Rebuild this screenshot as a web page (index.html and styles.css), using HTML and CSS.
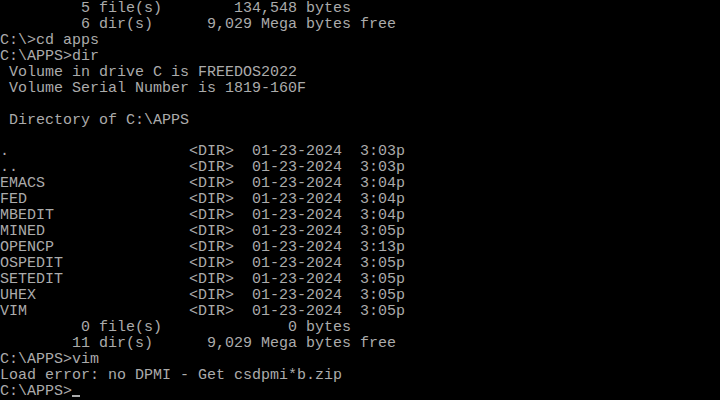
FILE: index.html
```html
<!DOCTYPE html>
<html lang="en">
<head>
    <meta charset="UTF-8">
    <title>FreeDOS</title>
    <link rel="stylesheet" href="styles.css">
</head>
<body>
    <!-- 80x25 text mode console -->
    <pre class="screen">
<span class="line">         5 file(s)        134,548 bytes</span>
<span class="line">         6 dir(s)      9,029 Mega bytes free</span>
<span class="line">C:\&gt;cd apps</span>
<span class="line">C:\APPS&gt;dir</span>
<span class="line"> Volume in drive C is FREEDOS2022</span>
<span class="line"> Volume Serial Number is 1819-160F</span>
<span class="line"></span>
<span class="line"> Directory of C:\APPS</span>
<span class="line"></span>
<span class="line">.                    &lt;DIR&gt;  01-23-2024  3:03p</span>
<span class="line">..                   &lt;DIR&gt;  01-23-2024  3:03p</span>
<span class="line">EMACS                &lt;DIR&gt;  01-23-2024  3:04p</span>
<span class="line">FED                  &lt;DIR&gt;  01-23-2024  3:04p</span>
<span class="line">MBEDIT               &lt;DIR&gt;  01-23-2024  3:04p</span>
<span class="line">MINED                &lt;DIR&gt;  01-23-2024  3:05p</span>
<span class="line">OPENCP               &lt;DIR&gt;  01-23-2024  3:13p</span>
<span class="line">OSPEDIT              &lt;DIR&gt;  01-23-2024  3:05p</span>
<span class="line">SETEDIT              &lt;DIR&gt;  01-23-2024  3:05p</span>
<span class="line">UHEX                 &lt;DIR&gt;  01-23-2024  3:05p</span>
<span class="line">VIM                  &lt;DIR&gt;  01-23-2024  3:05p</span>
<span class="line">         0 file(s)              0 bytes</span>
<span class="line">        11 dir(s)      9,029 Mega bytes free</span>
<span class="line">C:\APPS&gt;vim</span>
<span class="line">Load error: no DPMI - Get csdpmi*b.zip</span>
<span class="line">C:\APPS&gt;<span class="cursor"></span></span></pre>
</body>
</html>
```

FILE: styles.css
```css
html, body {
    margin: 0;
    padding: 0;
    background: #000;
}
.screen {
    margin: 0;
    box-sizing: border-box;
    width: 720px;
    height: 400px;
    padding-top: 1px;
    overflow: hidden;
    display: flex;
    flex-direction: column;
    font-family: "Liberation Mono", monospace;
    font-size: 15px;
    color: #ababab;
    background: #000;
}
.line {
    display: block;
    height: 16px;
    line-height: 16px;
    white-space: pre;
}
.cursor {
    display: inline-block;
    width: 8px;
    height: 13px;
    vertical-align: top;
    box-sizing: border-box;
    border-bottom: 2px solid #ababab;
}
```
